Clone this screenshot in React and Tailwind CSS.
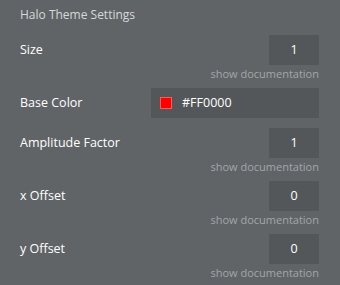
const rows = [
  { label: "Size", value: "1", doc: true },
  { label: "Base Color", value: "#FF0000", color: true },
  { label: "Amplitude Factor", value: "1", doc: true },
  { label: "x Offset", value: "0", doc: true },
  { label: "y Offset", value: "0", doc: true },
];

function Row({ row }) {
  return (
    <div className="flex flex-col">
      <div className="flex items-center justify-between h-[30px]">
        <span className="text-[12.5px] text-white">{row.label}</span>
        {row.color ? (
          <div className="w-[168px] h-[30px] bg-[#53575a] flex items-center pl-[9px] gap-[10px]">
            <span className="w-[12px] h-[12px] bg-[#ff0000] border border-[#ff5a4f]" />
            <span className="text-[12.5px] text-white">{row.value}</span>
          </div>
        ) : (
          <div className="w-[50px] h-[30px] bg-[#53575a] flex items-center justify-center text-[12.5px] text-white">
            {row.value}
          </div>
        )}
      </div>
      {row.doc && (
        <div className="h-[13px] leading-[18px] text-right text-[11px] text-[#a3a6a8]">
          show documentation
        </div>
      )}
    </div>
  );
}

export default function App() {
  return (
    <div
      className="w-[340px] h-[285px] bg-[#606467] pl-[20px] pr-[21px] pt-[6px]"
      style={{ fontFamily: '"Open Sans", "Noto Sans", sans-serif' }}
    >
      <div className="h-[19px] leading-[18px] text-[12px] text-[#d6d8da]">
        Halo Theme Settings
      </div>
      <div className="mt-[10px] flex flex-col gap-[10px]">
        {rows.map((row) => (
          <Row key={row.label} row={row} />
        ))}
      </div>
    </div>
  );
}
